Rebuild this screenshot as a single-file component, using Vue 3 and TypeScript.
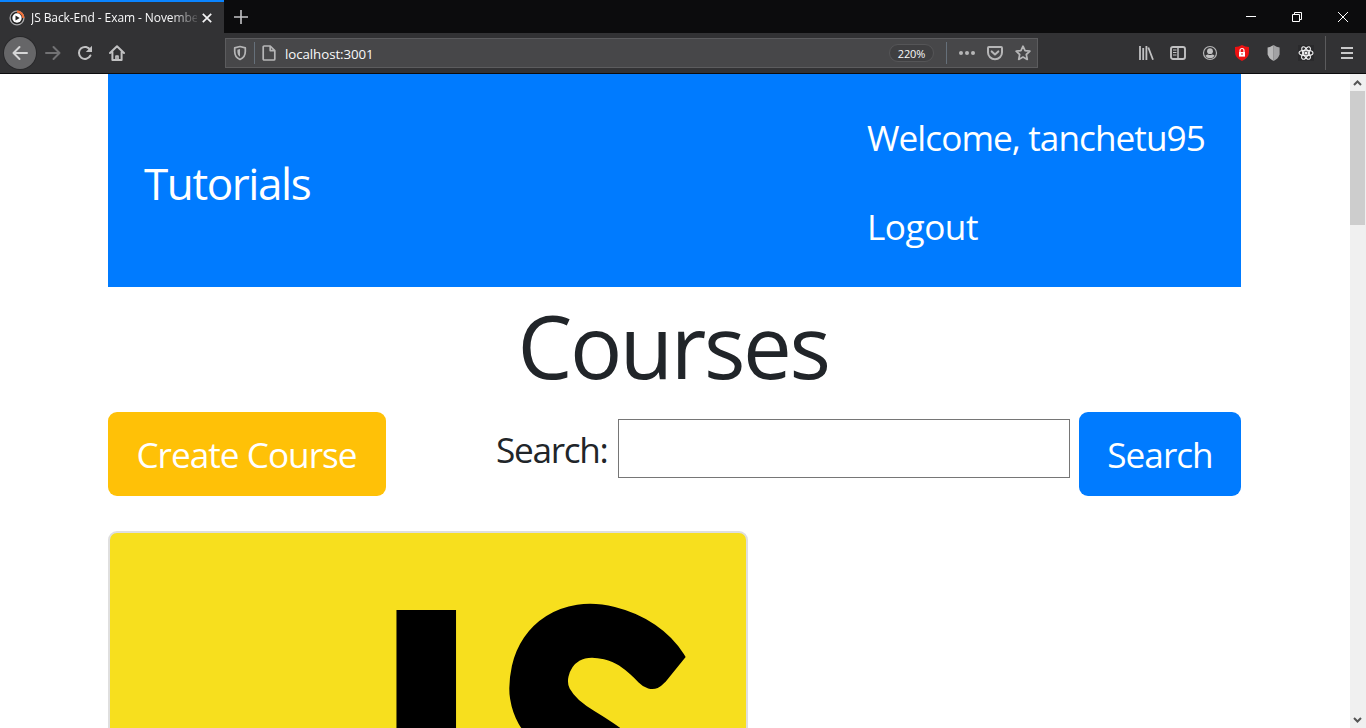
<script setup lang="ts">
import { ref } from 'vue'

const tabTitle = 'JS Back-End - Exam - November 2020'
const address = 'localhost:3001'
const zoomLevel = '220%'
const username = 'tanchetu95'
const query = ref('')
</script>

<template>
  <div class="browser">
    <header class="tabs">
      <div class="tab">
        <svg class="favicon" width="16" height="16" viewBox="0 0 16 16">
          <circle cx="8" cy="8" r="6.9" fill="#222" stroke="#a9a9ab" stroke-width="1.3" />
          <path d="M8 1.6A6.4 6.4 0 0 1 14.4 8" fill="none" stroke="#f0713a" stroke-width="2.2" />
          <circle cx="8" cy="8" r="4.7" fill="#fff" />
          <path d="M6.5 5.4 10.7 8l-4.2 2.6z" fill="#222" />
        </svg>
        <span class="tab-title">{{ tabTitle }}</span>
        <svg class="tab-close" width="10" height="10" viewBox="0 0 10 10">
          <path d="M.8.8l8.4 8.4M9.2.8L.8 9.2" stroke="#f4f4f5" stroke-width="1.7" />
        </svg>
      </div>
      <svg class="new-tab" width="14" height="14" viewBox="0 0 14 14">
        <path d="M7 0v14M0 7h14" stroke="#c4c4c6" stroke-width="1.6" />
      </svg>
      <div class="window-controls">
        <svg width="10" height="10" viewBox="0 0 10 10"><path d="M0 4.500h10" stroke="#fff" /></svg>
        <svg width="10" height="10" viewBox="0 0 10 10" fill="none" stroke="#fff">
          <path d="M.5 2.5h7v7h-7zM2.5 2.5v-2h7v7h-2" />
        </svg>
        <svg width="10" height="10" viewBox="0 0 10 10"><path d="M0 0l10 10M10 0L0 10" stroke="#fff" /></svg>
      </div>
    </header>

    <div class="toolbar">
      <span class="slot back">
        <svg width="16" height="16" viewBox="0 0 16 16" fill="none" stroke="#d6d6d7" stroke-width="2" stroke-linecap="round" stroke-linejoin="round">
          <path d="M15 8H1.5M7.5 2l-6 6 6 6" />
        </svg>
      </span>
      <span class="slot">
        <svg width="16" height="16" viewBox="0 0 16 16" fill="none" stroke="#727274" stroke-width="2" stroke-linecap="round" stroke-linejoin="round">
          <path d="M1 8h13.5M8.5 2l6 6-6 6" />
        </svg>
      </span>
      <span class="slot">
        <svg width="16" height="16" viewBox="0 0 16 16">
          <path d="M13.3 5.2A6 6 0 1 0 13.4 10.5" fill="none" stroke="#c1c1c2" stroke-width="2" stroke-linecap="round" />
          <path d="M15 .8V7H8.8z" fill="#c1c1c2" />
        </svg>
      </span>
      <span class="slot">
        <svg width="16" height="16" viewBox="0 0 16 16" fill="none" stroke="#c1c1c2" stroke-width="2" stroke-linecap="round" stroke-linejoin="round">
          <path d="M1 8l7-6.8L15 8M3.4 7v8h9.2V7" />
          <path d="M7 15v-4h2v4" stroke-width="1.7" />
        </svg>
      </span>

      <div class="url-bar">
        <svg class="tracking" width="14" height="16" viewBox="0 0 14 16">
          <path d="M7 1.5l5.3 1.4v3.6C12.3 10.500 10.500 13 7 14.500 3.500 13 1.700 10.500 1.700 6.500V2.900z" fill="none" stroke="#b6b6b7" stroke-width="1.7" stroke-linejoin="round" />
          <path d="M7 4L4.400 4.700v2c0 2.300.8 3.900 2.600 5z" fill="#b6b6b7" />
        </svg>
        <i class="rule"></i>
        <svg class="page-icon" width="14" height="16" viewBox="0 0 14 16" fill="none" stroke="#b6b6b7" stroke-width="1.7" stroke-linejoin="round">
          <path d="M2.200 1h6l4.600 4.600V14q0 1-1 1H2.200q-1 0-1-1V2q0-1 1-1zM8.200 1v4.600h4.600" />
        </svg>
        <span class="address">{{ address }}</span>
        <span class="zoom">{{ zoomLevel }}</span>
        <i class="rule"></i>
        <svg class="dots" width="16" height="16" viewBox="0 0 16 16" fill="#b6b6b7">
          <circle cx="2" cy="8" r="2" /><circle cx="8" cy="8" r="2" /><circle cx="14" cy="8" r="2" />
        </svg>
        <svg class="pocket" width="16" height="16" viewBox="0 0 16 16" fill="none" stroke="#b6b6b7" stroke-width="2" stroke-linecap="round" stroke-linejoin="round">
          <path d="M1.900 2h12.200q.9 0 .9.900V7.500a7 6.700 0 0 1-14 0V2.900q0-.9.900-.9z" /><path d="M4.700 6.400L8 9.500l3.300-3.100" />
        </svg>
        <svg width="16" height="16" viewBox="0 0 16 16" fill="none" stroke="#b6b6b7" stroke-width="1.700" stroke-linejoin="round">
          <path d="M8 1.200l2.050 4.500 4.850.5-3.600 3.300 1 4.900L8 12l-4.300 2.400 1-4.900L1.100 6.200l4.850-.5z" />
        </svg>
      </div>

      <div class="extensions">
        <span class="slot">
          <svg width="16" height="16" viewBox="0 0 16 16" stroke="#c1c1c2" stroke-width="2" stroke-linecap="butt">
            <path d="M2 1v14M5.200 3v12M8.400 1v14M10.300 2.500L15 14.700" stroke-width="1.800" />
          </svg>
        </span>
        <span class="slot">
          <svg width="16" height="16" viewBox="0 0 16 16" fill="none" stroke="#c1c1c2" stroke-width="1.900">
            <rect x="1" y="2" width="14" height="12" rx="2" /><path d="M8 2v12" stroke-width="1.500" /><path d="M3 5h3.500M3 7.500h3.500M3 10h3.500" stroke-width="1" />
          </svg>
        </span>
        <span class="slot">
          <svg width="16" height="16" viewBox="0 0 16 16">
            <circle cx="8" cy="8" r="6.500" fill="none" stroke="#b5b5b6" stroke-width="1.200" />
            <circle cx="8" cy="6.200" r="2.900" fill="#c1c1c2" /><path d="M3.400 10.700Q5 9.500 6 9.500q2 1 4 0 1.500 0 2.600 1.200Q11 13.200 8 13.200t-4.600-2.500z" fill="#c1c1c2" />
          </svg>
        </span>
        <span class="slot">
          <svg width="16" height="16" viewBox="0 0 16 16">
            <path d="M8 0q3 2 7 2v5q0 6-7 9-7-3-7-9V2q4 0 7-2z" fill="#ed1111" />
            <rect x="5" y="7" width="6" height="4.600" fill="#fff" /><path d="M6 7V5.500a2 2 0 0 1 4 0V7" fill="none" stroke="#fff" stroke-width="1.200" /><path d="M8 8v2" stroke="#d22" />
          </svg>
        </span>
        <span class="slot">
          <svg width="16" height="16" viewBox="0 0 16 16">
            <path d="M7.600 0q3 2 6 2.500v7Q12 14 7.600 16z" fill="#a2a2a4" /><path d="M7.600 0q-3 2-6 2.500v7Q3 14 7.600 16z" fill="#b7b7b8" />
          </svg>
        </span>
        <span class="slot">
          <svg class="react" width="16" height="16" viewBox="0 0 16 16" fill="none" stroke="#f4f4f5" stroke-width="1.100">
            <ellipse cx="8" cy="8" rx="7" ry="2.700" /><ellipse cx="8" cy="8" rx="7" ry="2.700" transform="rotate(60 8 8)" /><ellipse cx="8" cy="8" rx="7" ry="2.700" transform="rotate(120 8 8)" /><circle cx="8" cy="8" r="1" fill="#fff" />
          </svg>
        </span>
        <i class="menu-rule"></i>
        <span class="slot">
          <svg width="12" height="12" viewBox="0 0 12 12"><path d="M0 1h12M0 6h12M0 11h12" stroke="#c9c9ca" stroke-width="2" /></svg>
        </span>
      </div>
    </div>

    <div class="viewport">
      <main class="page">
        <nav class="navbar">
          <a class="brand">Tutorials</a>
          <ul class="nav">
            <li class="welcome">Welcome, {{ username }}</li>
            <li class="logout">Logout</li>
          </ul>
        </nav>
        <h1>Courses</h1>
        <div class="actions">
          <button class="btn create">Create Course</button>
          <form class="search" @submit.prevent>
            <label for="q">Search:</label>
            <input id="q" v-model="query" type="text" />
            <button class="btn submit">Search</button>
          </form>
        </div>
        <article class="card">
          <svg class="cover" width="636" height="636" viewBox="0 0 636 636">
            <text transform="translate(202 341) scale(1.09 1)">J</text>
            <text class="logo-s" y="131" transform="translate(470 210) scale(.94 1) rotate(13)">S</text>
          </svg>
        </article>
      </main>
      <aside class="scrollbar">
        <svg width="9" height="6" viewBox="0 0 9 6"><path d="M1 5l3.500-3.500L8 5" fill="none" stroke="#555" stroke-width="2" /></svg>
        <i class="thumb"></i>
        <svg class="down" width="9" height="6" viewBox="0 0 9 6"><path d="M1 1l3.500 3.500L8 1" fill="none" stroke="#555" stroke-width="2" /></svg>
      </aside>
    </div>
  </div>
</template>

<style>
body { margin: 0; overflow: hidden; }
</style>

<style scoped>
* { box-sizing: border-box; }
svg { display: block; flex: none; }
.browser { width: 1366px; height: 728px; display: flex; flex-direction: column; overflow: hidden; background: #fff; font-family: "Open Sans", "Noto Sans", sans-serif; }
.tabs { height: 33px; flex: none; display: flex; align-items: center; background: #0c0c0d; }
.tab { width: 224px; height: 33px; display: flex; align-items: center; background: #323234; border-top: 2px solid #0a84ff; padding: 0 12px 0 9px; }
.tab-title { width: 166px; margin-left: 6px; overflow: hidden; white-space: nowrap; color: #f9f9fa; font-size: 12px; line-height: 20px; letter-spacing: -.08px; -webkit-mask-image: linear-gradient(to right, #000 140px, transparent 170px); mask-image: linear-gradient(to right, #000 140px, transparent 170px); }
.tab-close { margin-left: 5px; }
.new-tab { margin-left: 10px; }
.window-controls { margin-left: auto; padding-right: 18px; display: flex; gap: 36px; }
.toolbar { height: 41px; flex: none; display: flex; align-items: center; background: #323234; border-bottom: 1px solid #0c0c0d; padding-left: 4px; }
.slot { width: 32px; height: 32px; flex: none; display: flex; align-items: center; justify-content: center; }
.back { border-radius: 50%; background: #666668; box-shadow: 0 0 0 1px #29292b; margin-right: 1px; }
.url-bar { margin-left: 92px; width: 813px; height: 30px; flex: none; display: flex; align-items: center; border: 1px solid #5c5c5e; background: #474749; padding: 0 6px 0 7px; }
.rule { width: 1px; height: 22px; background: #66707a; }
.tracking { margin-right: 7px; }
.page-icon { margin: 0 9px 0 7px; }
.address { color: #f9f9fa; font-size: 13.3px; line-height: 20px; letter-spacing: -.07px; padding-top: 2px; }
.zoom { margin: 0 12px 0 auto; width: 45px; height: 18px; border-radius: 9px; border: 1px solid #555557; background: #3f3f41; color: #f9f9fa; font-size: 11px; line-height: 17px; letter-spacing: -.1px; text-align: center; }
.dots { margin-left: 12px; }
.pocket { margin: 0 12px; }
.extensions { display: flex; align-items: center; margin-left: 92px; }
.react { background: #2a2a2c; }
.menu-rule { width: 1px; height: 34px; margin: 0 5px 0 3px; background: #5b5b5d; }
.viewport { flex: 1; min-height: 0; display: flex; overflow: hidden; }
.page { flex: 1; padding: 0 109px 0 108px; color: #212529; font-size: 35.2px; line-height: 52.8px; letter-spacing: -.95px; }
.navbar { height: 213px; display: flex; align-items: center; justify-content: space-between; padding: 2px 35px 0 36px; background: #007bff; color: #fff; }
.brand { font-size: 44px; line-height: 66px; letter-spacing: -1.4px; padding-top: 2px; }
.nav { list-style: none; margin: 0; padding: 0; width: 339px; white-space: nowrap; }
.nav li { padding: 18px 0 18px; }
.nav .logout { letter-spacing: -.5px; }
h1 { margin: 5px 0 14px; padding-right: 3px; font-size: 87px; line-height: 106px; font-weight: 400; text-align: center; letter-spacing: -2.400px; }
.actions { display: flex; justify-content: space-between; height: 84px; }
.btn { height: 84px; border: 0; border-radius: 9px; padding: 0; color: #fff; font: inherit; letter-spacing: -1px; }
.create { width: 278px; background: #ffc107; padding-right: 1px; }
.search { display: flex; align-items: flex-start; }
.search label { margin: 11px 10px 0 0; width: 112px; white-space: nowrap; letter-spacing: -1.300px; }
.search input { width: 452px; height: 59px; margin: 7px 9px 0 0; border: 1px solid #767676; background: #fff; font: inherit; outline: 0; }
.submit { width: 162px; background: #007bff; }
.card { width: 640px; height: 640px; margin-top: 35px; border: 2px solid #dfdfdf; border-radius: 9px; background: #f7df1e; overflow: hidden; }
.cover text { font-family: Lato, sans-serif; font-weight: 900; font-size: 364px; letter-spacing: 0; fill: #000; }
.cover .logo-s { text-anchor: middle; stroke: #000; stroke-width: 10px; }
.scrollbar { width: 16px; flex: none; display: flex; flex-direction: column; align-items: center; background: #f0f0f0; padding: 6px 1px 5px 0; }
.thumb { width: 15px; height: 134px; margin-top: 5px; background: #cdcdcd; }
.down { margin-top: auto; }
</style>
